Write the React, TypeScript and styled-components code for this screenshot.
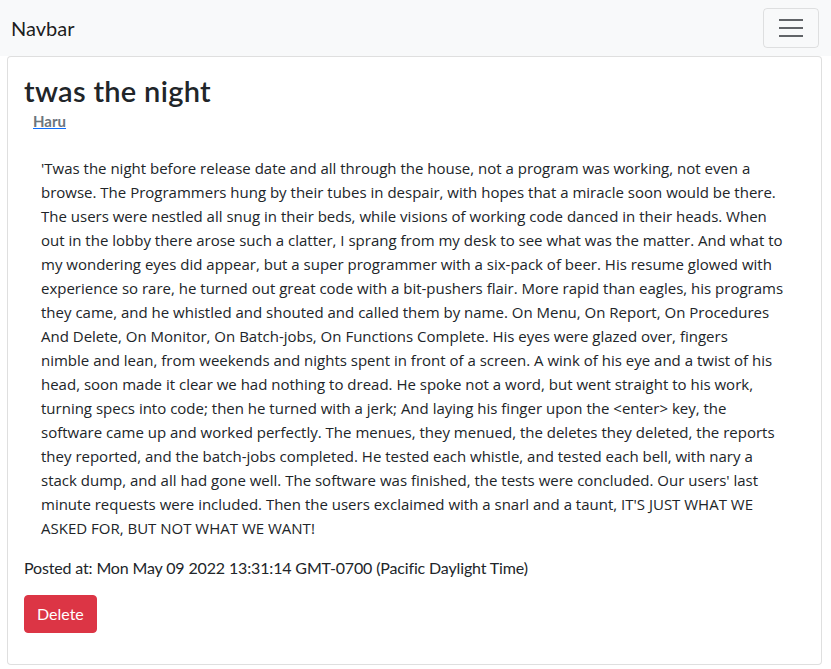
import React from "react";
import styled, { createGlobalStyle } from "styled-components";

const Global = createGlobalStyle`
  html, body { margin: 0; padding: 0; background: #fff; }
  body {
    font-family: Lato, "Liberation Sans", sans-serif;
    font-size: 16px;
    line-height: 1.5;
    color: #212529;
  }
  * { box-sizing: border-box; }
`;

const Nav = styled.nav`
  display: flex;
  align-items: center;
  justify-content: space-between;
  height: 56px;
  padding: 0 12px 0 11px;
  background: #f8f9fa;
`;

const Brand = styled.a`
  font-size: 20px;
  color: rgba(0, 0, 0, 0.9);
  text-decoration: none;
`;

const Toggler = styled.button`
  display: flex;
  align-items: center;
  justify-content: center;
  width: 56px;
  height: 40px;
  padding: 0;
  background: transparent;
  border: 1px solid rgba(0, 0, 0, 0.1);
  border-radius: 4px;
`;

const Card = styled.article`
  margin: 0 9px 0 7px;
  border: 1px solid rgba(0, 0, 0, 0.125);
  border-radius: 4px;
  padding: 17px 16px 31px 16px;
  background: #fff;
`;

const Title = styled.h3`
  margin: 0;
  font-size: 29px;
  font-weight: 600;
  letter-spacing: 0.3px;
  line-height: 1.2;
`;

const Author = styled.a`
  display: inline-block;
  margin: 2px 0 0 9px;
  font-size: 15px;
  font-weight: 700;
  color: #6c757d;
  text-decoration: underline;
  text-decoration-color: #0d6efd;
  line-height: 1.2;
`;

const Body = styled.p`
  margin: 23px 0 16px 0;
  padding: 0 16px 0 17px;
  font-family: "Open Sans", Lato, sans-serif;
  font-size: 15px;
  line-height: 24px;
`;

const Line = styled.span`
  display: block;
  white-space: nowrap;
`;

const Posted = styled.p`
  margin: 0 0 15px 0;
  letter-spacing: -0.15px;
`;

const DeleteButton = styled.button`
  font-family: inherit;
  font-size: 16px;
  line-height: 1.5;
  padding: 6px 12px;
  color: #fff;
  background: #dc3545;
  border: 1px solid #dc3545;
  border-radius: 4px;
`;

const lines = [
  "'Twas the night before release date and all through the house, not a program was working, not even a",
  "browse. The Programmers hung by their tubes in despair, with hopes that a miracle soon would be there.",
  "The users were nestled all snug in their beds, while visions of working code danced in their heads. When",
  "out in the lobby there arose such a clatter, I sprang from my desk to see what was the matter. And what to",
  "my wondering eyes did appear, but a super programmer with a six-pack of beer. His resume glowed with",
  "experience so rare, he turned out great code with a bit-pushers flair. More rapid than eagles, his programs",
  "they came, and he whistled and shouted and called them by name. On Menu, On Report, On Procedures",
  "And Delete, On Monitor, On Batch-jobs, On Functions Complete. His eyes were glazed over, fingers",
  "nimble and lean, from weekends and nights spent in front of a screen. A wink of his eye and a twist of his",
  "head, soon made it clear we had nothing to dread. He spoke not a word, but went straight to his work,",
  "turning specs into code; then he turned with a jerk; And laying his finger upon the <enter> key, the",
  "software came up and worked perfectly. The menues, they menued, the deletes they deleted, the reports",
  "they reported, and the batch-jobs completed. He tested each whistle, and tested each bell, with nary a",
  "stack dump, and all had gone well. The software was finished, the tests were concluded. Our users' last",
  "minute requests were included. Then the users exclaimed with a snarl and a taunt, IT'S JUST WHAT WE",
  "ASKED FOR, BUT NOT WHAT WE WANT!",
];

export default function App() {
  return (
    <>
      <Global />
      <Nav>
        <Brand href="#">Navbar</Brand>
        <Toggler aria-label="Toggle navigation">
          <svg width="30" height="30" viewBox="0 0 30 30">
            <path
              d="M3 7h24M3 15h24M3 23h24"
              stroke="rgba(33,37,41,0.7)"
              strokeWidth="2"
            />
          </svg>
        </Toggler>
      </Nav>
      <Card>
        <Title>twas the night</Title>
        <Author href="#">Haru</Author>
        <Body>
          {lines.map((l, i) => (
            <Line key={i}>{l}</Line>
          ))}
        </Body>
        <Posted>Posted at: Mon May 09 2022 13:31:14 GMT-0700 (Pacific Daylight Time)</Posted>
        <DeleteButton>Delete</DeleteButton>
      </Card>
    </>
  );
}
